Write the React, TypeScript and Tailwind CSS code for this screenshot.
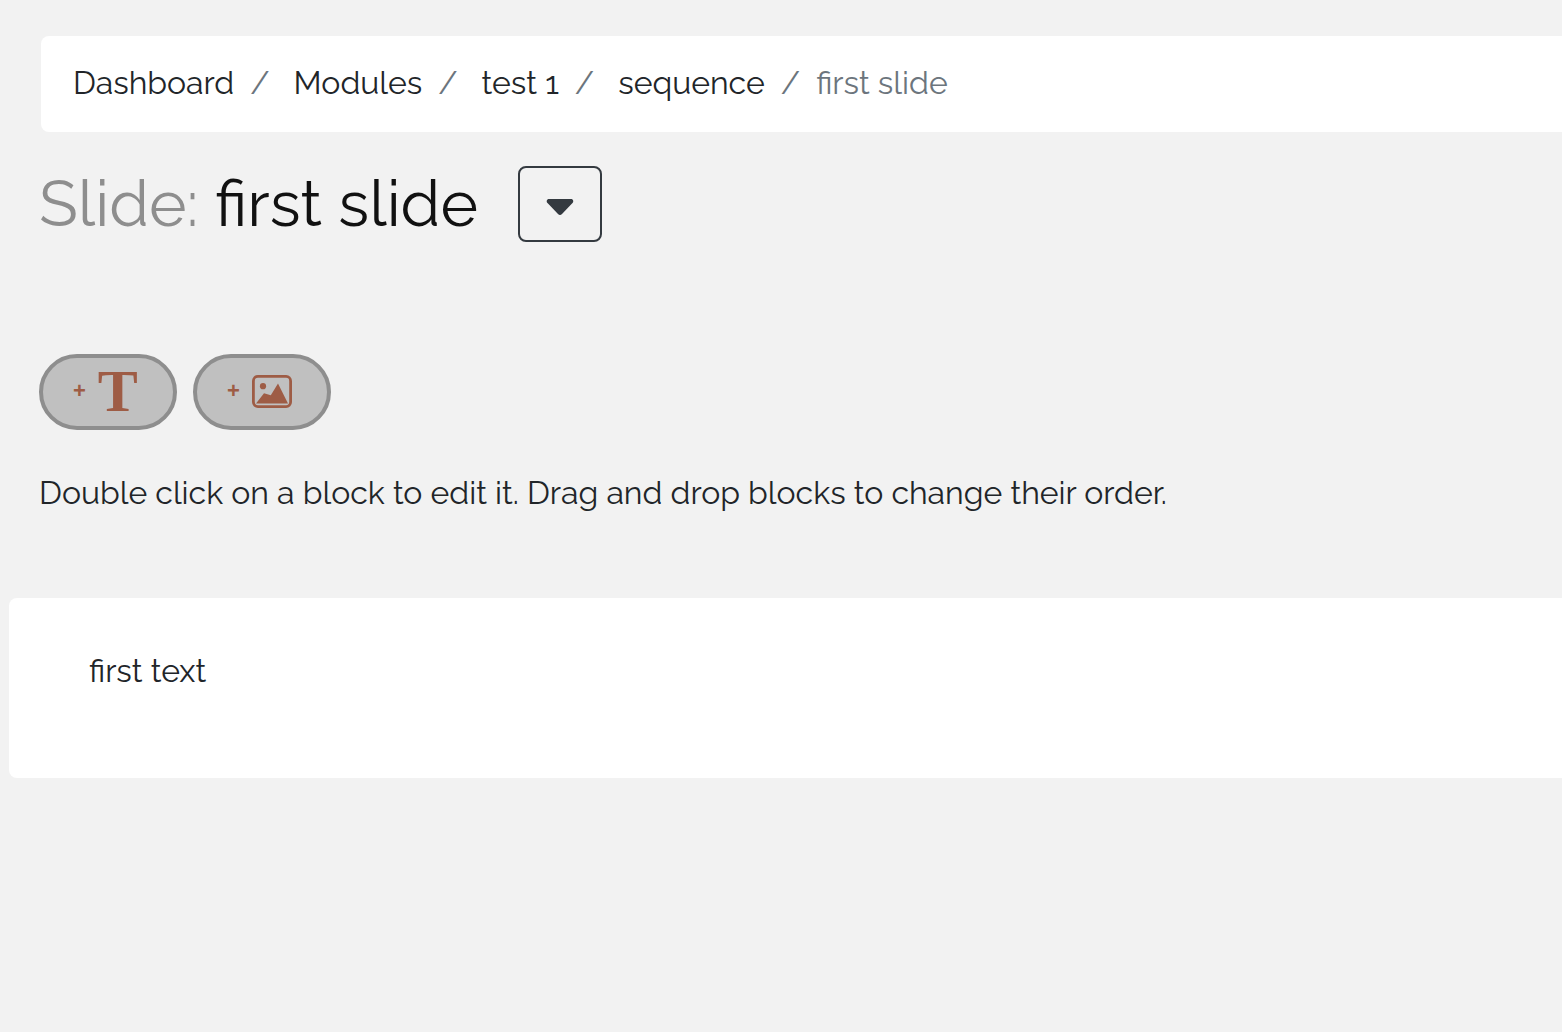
const crumbs = [
  { label: "Dashboard", href: "#dashboard" },
  { label: "Modules", href: "#modules" },
  { label: "test 1", href: "#test-1" },
  { label: "sequence", href: "#sequence" },
];

function Breadcrumb() {
  return (
    <nav aria-label="Breadcrumb" className="ml-0.5 rounded-l-lg bg-white px-8 pt-[23px] pb-[25px]">
      <ol className="flex whitespace-nowrap">
        {crumbs.map((crumb) => (
          <li key={crumb.label} className="mr-6 flex gap-4 nth-4:mr-4">
            <a href={crumb.href}>{crumb.label}</a>
            <span aria-hidden="true" className="text-[#6c757d]">/</span>
          </li>
        ))}
        <li aria-current="page" className="text-[#6c757d]">first slide</li>
      </ol>
    </nav>
  );
}

const pill =
  "flex h-[76px] items-center gap-3 rounded-full border-4 border-[#8e8e8e] bg-[#c0c0c0] pr-[35px] pb-0.5 pl-[30px] text-[#9e5c45]";
const plus = "font-['Liberation_Sans',sans-serif] text-[22px] leading-6 font-bold";

function PictureIcon() {
  return (
    <svg width="40" height="33" viewBox="0 0 40 33" fill="currentColor" aria-hidden="true">
      <rect x="1.4" y="1.4" width="37.2" height="30.2" rx="4.5" fill="none" stroke="currentColor" strokeWidth="2.8" />
      <circle cx="11" cy="11.2" r="3.1" />
      <path d="M4 28.4 12 18.2 18.8 20.2 26 8.6 36 28.4Z" />
    </svg>
  );
}

export default function App() {
  return (
    <main className="min-h-screen overflow-hidden bg-[#f2f2f2] pt-9 font-['Raleway','Lato',sans-serif] text-[32px] leading-[48px] text-[#212529]">
      <div className="pl-[39px]">
        <Breadcrumb />

        <div className="mt-[34px] flex items-center gap-10">
          <h1 className="text-[64px] leading-[76px] text-[#111111]">
            <span className="text-[#8e8e8e]">Slide:</span> first slide
          </h1>
          <button
            type="button"
            aria-label="Slide options"
            className="flex h-[76px] w-[84px] items-center justify-center rounded-lg border-2 border-[#343a40] pt-1.5 text-[#343a40]"
          >
            <svg width="28" height="18" viewBox="0 0 28 18" fill="currentColor" aria-hidden="true">
              <path d="M3 1H25C27.2 1 28 3.5 26.5 5L16 16C14.8 17.3 13.2 17.3 12 16L1.5 5C0 3.5.8 1 3 1Z" />
            </svg>
          </button>
        </div>

        <div className="mt-28 flex gap-4">
          <button type="button" aria-label="Add text block" className={pill}>
            <span className={plus}>+</span>
            <span className="font-['Liberation_Serif',serif] text-[60px] leading-[66px] font-bold">T</span>
          </button>
          <button type="button" aria-label="Add image block" className={pill}>
            <span className={plus}>+</span>
            <PictureIcon />
          </button>
        </div>

        <p className="mt-[39px]">
          Double click on a block to edit it. Drag and drop blocks to change their order.
        </p>
      </div>

      <section className="mt-[81px] ml-[9px] rounded-l-lg bg-white px-20 pt-[49px] pb-[83px]">
        <p>first text</p>
      </section>
    </main>
  );
}
